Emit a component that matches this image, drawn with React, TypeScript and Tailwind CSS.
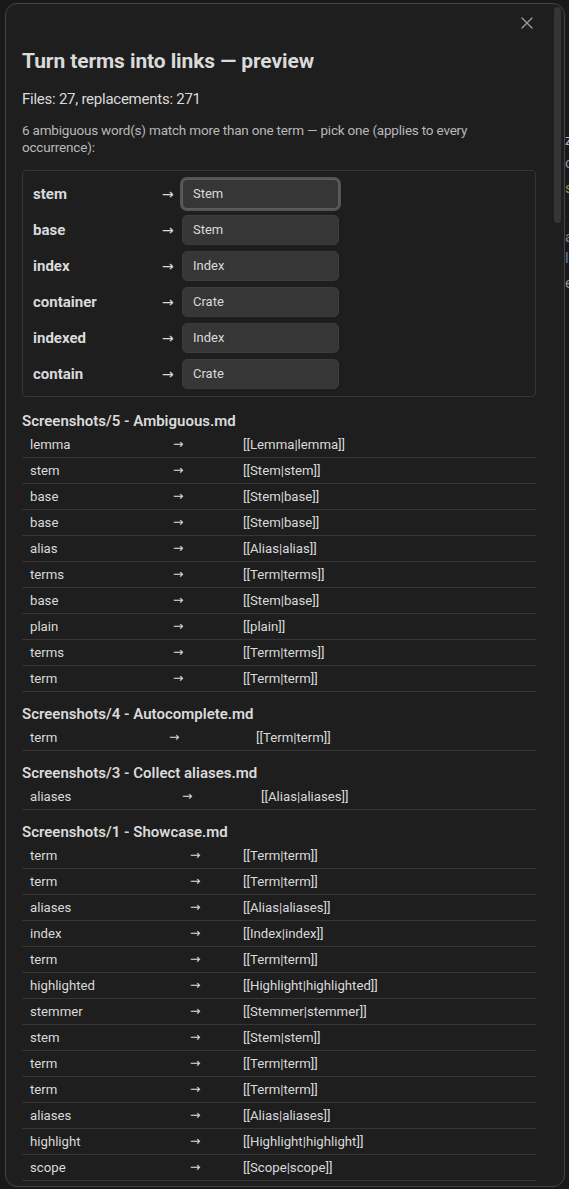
import React from "react";

type Row = [string, string];

const ambiguous: { word: string; pick: string; focused?: boolean }[] = [
  { word: "stem", pick: "Stem", focused: true },
  { word: "base", pick: "Stem" },
  { word: "index", pick: "Index" },
  { word: "container", pick: "Crate" },
  { word: "indexed", pick: "Index" },
  { word: "contain", pick: "Crate" },
];

const files: { name: string; cols: string; rows: Row[] }[] = [
  {
    name: "Screenshots/5 - Ambiguous.md",
    cols: "grid-cols-[151px_70px_1fr]",
    rows: [
      ["lemma", "[[Lemma|lemma]]"],
      ["stem", "[[Stem|stem]]"],
      ["base", "[[Stem|base]]"],
      ["base", "[[Stem|base]]"],
      ["alias", "[[Alias|alias]]"],
      ["terms", "[[Term|terms]]"],
      ["base", "[[Stem|base]]"],
      ["plain", "[[plain]]"],
      ["terms", "[[Term|terms]]"],
      ["term", "[[Term|term]]"],
    ],
  },
  {
    name: "Screenshots/4 - Autocomplete.md",
    cols: "grid-cols-[147px_87px_1fr]",
    rows: [["term", "[[Term|term]]"]],
  },
  {
    name: "Screenshots/3 - Collect aliases.md",
    cols: "grid-cols-[160px_79px_1fr]",
    rows: [["aliases", "[[Alias|aliases]]"]],
  },
  {
    name: "Screenshots/1 - Showcase.md",
    cols: "grid-cols-[168px_53px_1fr]",
    rows: [
      ["term", "[[Term|term]]"],
      ["term", "[[Term|term]]"],
      ["aliases", "[[Alias|aliases]]"],
      ["index", "[[Index|index]]"],
      ["term", "[[Term|term]]"],
      ["highlighted", "[[Highlight|highlighted]]"],
      ["stemmer", "[[Stemmer|stemmer]]"],
      ["stem", "[[Stem|stem]]"],
      ["term", "[[Term|term]]"],
      ["term", "[[Term|term]]"],
      ["aliases", "[[Alias|aliases]]"],
      ["highlight", "[[Highlight|highlight]]"],
      ["scope", "[[Scope|scope]]"],
    ],
  },
];

const bgGlyphs: { ch: string; mt: string; cls: string }[] = [
  { ch: "z", mt: "mt-[131px]", cls: "text-[#a9b6cc]" },
  { ch: "o", mt: "mt-[5px]", cls: "text-[#8794a6]" },
  { ch: "s", mt: "mt-[7px]", cls: "text-[#a58a62]" },
  { ch: "a", mt: "mt-[31px]", cls: "text-[#7d8ca3]" },
  { ch: "l", mt: "mt-[3px]", cls: "text-[#5f7fb0]" },
  { ch: "e", mt: "mt-[7px]", cls: "text-[#8a8f98]" },
];

export default function App() {
  return (
    <div className="relative w-[569px] h-[1189px] overflow-hidden bg-[#191919] font-['Roboto',sans-serif] text-[#dadada]">
      {/* underlying note, mostly hidden behind the modal */}
      <div className="absolute left-[565px] top-0 flex flex-col text-[15px] leading-[18px]">
        {bgGlyphs.map((g, i) => (
          <span key={i} className={`${g.mt} ${g.cls}`}>
            {g.ch}
          </span>
        ))}
      </div>

      <div className="relative z-10 ml-[5px] mt-[3px] w-[560px] h-[1184px] overflow-hidden rounded-xl border border-[#454545] bg-[#1e1e1e] pl-4 pt-[43px]">
        {/* close button */}
        <div className="absolute left-[512px] top-[10px] flex h-[18px] w-[18px] items-center justify-center text-[#9e9e9e]">
          <svg width="12" height="12" viewBox="0 0 12 12" fill="none" stroke="currentColor" strokeWidth="1.3" strokeLinecap="round">
            <path d="M1 1L11 11M11 1L1 11" />
          </svg>
        </div>
        {/* scrollbar thumb */}
        <div className="absolute left-[548px] top-[3px] h-[216px] w-[7px] rounded-full bg-[#353535]" />

        <div className="w-[514px]">
          <div className="h-[28px] text-[21px] font-bold leading-[28px] tracking-[-0.1px] text-[#dadada]">
            Turn terms into links — preview
          </div>
          <div className="mt-[13px] h-[22px] text-[15px] leading-[22px] tracking-[-0.25px]">
            Files: 27, replacements: 271
          </div>
          <div className="mt-[12px] text-[13.5px] leading-[17px] tracking-[-0.2px] text-[#b8b8b8]">
            6 ambiguous word(s) match more than one term — pick one (applies to every occurrence):
          </div>

          <div className="mt-[14px] flex flex-col gap-[6px] rounded-[4px] border border-[#363636] pl-[10px] pt-[8px] pb-[7px]">
            {ambiguous.map((a) => (
              <div key={a.word} className="flex h-[30px] items-center">
                <span className="w-[129px] text-[15px] font-bold">{a.word}</span>
                <span className="w-[20px] font-['DejaVu_Sans',sans-serif] text-[14px]">→</span>
                <div
                  className={`flex h-[30px] w-[157px] items-center rounded-[5px] bg-[#363636] pl-[10px] text-[13px] ${
                    a.focused
                      ? "border border-[#5e5e5e] shadow-[0_0_0_2px_#555555]"
                      : "border border-[#3c3c3c]"
                  }`}
                >
                  {a.pick}
                </div>
              </div>
            ))}
          </div>

          {files.map((f, fi) => (
            <div key={f.name}>
              <div
                className={`${fi === 0 ? "mt-[10px]" : "mt-[8px]"} h-[25px] text-[15px] font-semibold leading-[28px]`}
              >
                {f.name}
              </div>
              <div className="flex flex-col">
                {f.rows.map((r, ri) => (
                  <div
                    key={ri}
                    className={`grid h-[26px] ${f.cols} items-center border-b border-[#363636] text-[13.2px]`}
                  >
                    <span className="pl-2">{r[0]}</span>
                    <span className="font-['DejaVu_Sans',sans-serif] text-[12.5px]">→</span>
                    <span>{r[1]}</span>
                  </div>
                ))}
              </div>
            </div>
          ))}
        </div>
      </div>
    </div>
  );
}
